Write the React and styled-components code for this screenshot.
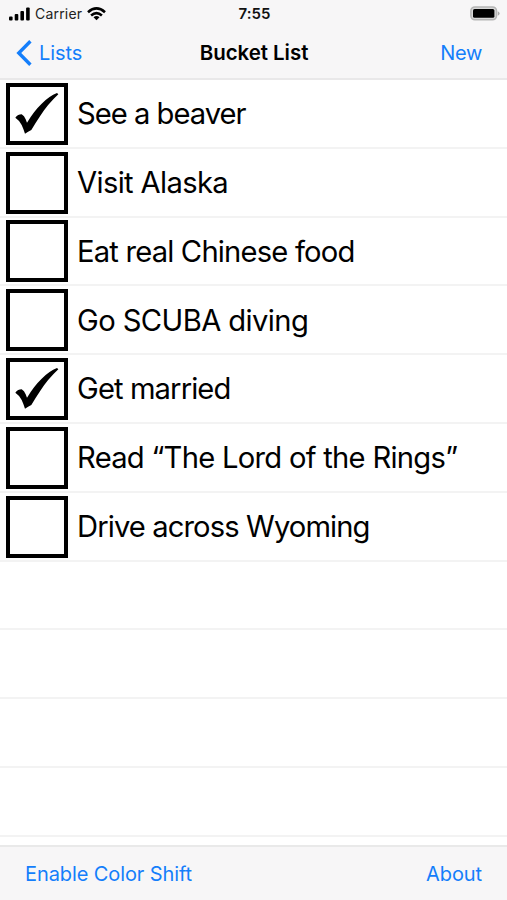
import React, { useState } from 'react';
import styled, { createGlobalStyle } from 'styled-components';

const GlobalStyle = createGlobalStyle`
    * {
        box-sizing: border-box;
    }
    body {
        margin: 0;
        background: #fff;
        color: #000;
        font-family: Inter, "Liberation Sans", sans-serif;
    }
`

const Screen = styled.div`
    display: flex;
    flex-direction: column;
    width: 507px;
    height: 900px;
    overflow: hidden;
`

const Header = styled.header`
    flex: none;
    height: 80px;
    background: #f7f6f7;
    border-bottom: 2px solid #e9e8e9;
`

const StatusBar = styled.div`
    display: grid;
    grid-template-columns: 1fr auto 1fr;
    align-items: center;
    height: 27px;
    padding: 0 7px 0 9px;
`

const Signal = styled.div`
    display: flex;
    align-items: center;
    gap: 5px;
`

const Carrier = styled.span`
    font-size: 14px;
    letter-spacing: 0.2px;
    color: #222;
`

const Time = styled.span`
    font-size: 15px;
    font-weight: 600;
    letter-spacing: 0.1px;
    color: #111;
`

const BatterySlot = styled.div`
    display: flex;
    justify-content: flex-end;
`

const NavBar = styled.nav`
    display: grid;
    grid-template-columns: 1fr auto 1fr;
    align-items: center;
    height: 51px;
    padding: 0 25px;
`

const Title = styled.h1`
    margin: 0;
    padding: 0 0 1px 1px;
    font-size: 20.5px;
    font-weight: 600;
    letter-spacing: ${props => props.$tracking}px;
`

const BarButton = styled.button`
    display: flex;
    align-items: center;
    gap: 7px;
    justify-self: ${props => props.$side || 'start'};
    margin-left: ${props => props.$outset ? -props.$outset : 0}px;
    padding: 0;
    border: 0;
    background: none;
    color: #147efb;
    font-family: inherit;
    font-size: 20px;
    line-height: 28px;
    letter-spacing: ${props => props.$tracking || 0}px;
`

const List = styled.ul`
    flex: 1;
    min-height: 0;
    overflow: hidden;
    margin: 0;
    padding: 0;
    list-style: none;
`

const Row = styled.li`
    display: flex;
    align-items: center;
    gap: 9px;
    height: 68.8px;
    padding: 1px 6px 0;
    border-bottom: 2px solid #f3f3f3;
`

const CheckBox = styled.button`
    flex: none;
    width: 62px;
    height: 62px;
    padding: 0;
    border: 4px solid #000;
    background: #fff;
`

const Label = styled.span`
    padding-top: 0.8px;
    font-size: 29.2px;
    line-height: 36px;
    white-space: nowrap;
    letter-spacing: ${props => props.$tracking}px;
`

const Toolbar = styled.footer`
    flex: none;
    display: flex;
    align-items: center;
    justify-content: space-between;
    height: 55px;
    padding: 0 25px;
    background: #f7f6f7;
    border-top: 2px solid #e9e9e9;
`

const Bars = () => (
    <svg width="21" height="14" viewBox="0 0 21 14">
        <rect x="0" y="9.5" width="3.6" height="4" rx="1" />
        <rect x="5.7" y="7" width="3.6" height="6.5" rx="1" />
        <rect x="11.4" y="4" width="3.6" height="9.5" rx="1" />
        <rect x="17.1" y="0.5" width="3.6" height="13" rx="1" />
    </svg>
)

const Wifi = () => (
    <svg width="19" height="14" viewBox="0 0 19 14" fill="none" stroke="#000" strokeWidth="2.6">
        <path d="M1 5.2Q9.5 -2.3 18 5.2" />
        <path d="M4.1 8.5Q9.5 3.8 14.9 8.5" />
        <path d="M9.5 13.2L6.5 10.2Q9.5 7.8 12.5 10.2Z" fill="#000" stroke="none" />
    </svg>
)

const Battery = () => (
    <svg width="31" height="16" viewBox="0 0 31 16">
        <rect x="1.9" y="1" width="25.6" height="12.8" rx="4" fill="#d8d8d8" stroke="#b5b5b5" strokeWidth="1.6" />
        <rect x="4" y="3" width="21.4" height="8.8" rx="1.6" />
        <path d="M28.8 5.2Q30.6 6 30.6 7.5Q30.6 9 28.8 9.8Z" fill="#aaa" />
    </svg>
)

const Chevron = () => (
    <svg width="16" height="26" viewBox="0 0 16 26" fill="none" stroke="#147efb" strokeWidth="3.4">
        <path d="M14.4 1.3L2.8 13L14.4 24.7" />
    </svg>
)

const Check = () => (
    <svg width="54" height="54" viewBox="12 12 162 162">
        <path d="M28 104Q36 94 47 94Q55 98 59 109L63 119Q83 85 107 62Q130 39 153 30L157 34Q125 64 104 97Q88 121 76 141Q66 146 57 152Q53 139 47 126Q38 110 28 104Z" />
    </svg>
)

const startItems = [
    { name: 'See a beaver', done: true, tracking: -1 },
    { name: 'Visit Alaska', done: false, tracking: -0.65 },
    { name: 'Eat real Chinese food', done: false, tracking: -0.81 },
    { name: 'Go SCUBA diving', done: false, tracking: -0.6 },
    { name: 'Get married', done: true, tracking: -0.9 },
    { name: 'Read “The Lord of the Rings”', done: false, tracking: -0.73 },
    { name: 'Drive across Wyoming', done: false, tracking: -0.9 },
]

const emptyRows = [0, 1, 2, 3]

export default function App() {

    const [items, setItems] = useState(startItems);

    function toggleHandler(index) {
        setItems(items.map((item, i) => i === index ? { ...item, done: !item.done } : item));
    }

    return (
        <Screen>
            <GlobalStyle />
            <Header>
                <StatusBar>
                    <Signal>
                        <Bars />
                        <Carrier>Carrier</Carrier>
                        <Wifi />
                    </Signal>
                    <Time>7:55</Time>
                    <BatterySlot><Battery /></BatterySlot>
                </StatusBar>
                <NavBar>
                    <BarButton $outset={9} $tracking={-0.1}><Chevron />Lists</BarButton>
                    <Title $tracking={-0.05}>Bucket List</Title>
                    <BarButton $side="end" $tracking={-0.3}>New</BarButton>
                </NavBar>
            </Header>
            <List>
                {items.map((item, i) => (
                    <Row key={item.name}>
                        <CheckBox aria-label={item.name} onClick={() => toggleHandler(i)}>
                            {item.done && <Check />}
                        </CheckBox>
                        <Label $tracking={item.tracking}>{item.name}</Label>
                    </Row>
                ))}
                {emptyRows.map(n => <Row key={n} />)}
            </List>
            <Toolbar>
                <BarButton $tracking={-0.1}>Enable Color Shift</BarButton>
                <BarButton $tracking={-0.1}>About</BarButton>
            </Toolbar>
        </Screen>
    );
}
